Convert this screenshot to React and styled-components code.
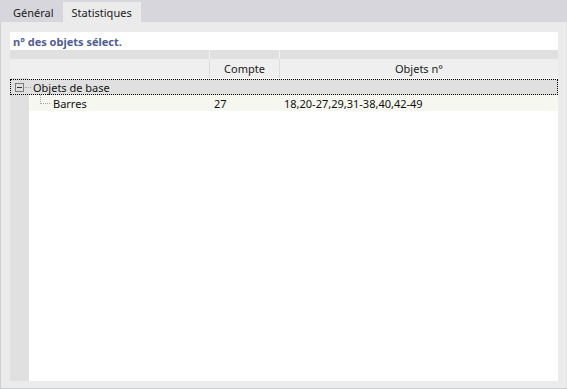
import styled, { createGlobalStyle } from 'styled-components'

const Global = createGlobalStyle`
  html, body { margin: 0; padding: 0; background: #ebebeb; }
  body { font-family: "Noto Sans", "Open Sans", sans-serif; font-size: 11px; color: #111; }
`

const Window = styled.div`
  width: 567px;
  height: 389px;
  display: flex;
  flex-direction: column;
  background: #d6d6dc;
  overflow: hidden;
`
const TabBar = styled.div`
  height: 22px;
  display: flex;
  align-items: flex-end;
  padding-left: 4px;
  flex-shrink: 0;
`
const Tab = styled.div`
  height: 20px;
  padding: 0 9px;
  display: flex;
  align-items: center;
  background: ${p => (p.active ? '#ebebeb' : 'transparent')};
  color: #1a1a1a;
`
const Panel = styled.div`
  flex: 1;
  display: flex;
  flex-direction: column;
  background: #ebebeb;
  border-left: 1px solid #cfcfd6;
  border-bottom: 1px solid #cfcfd6;
  border-right: 1px solid #e3e3e3;
  padding: 10px 8px 7px 9px;
  min-height: 0;
`
const Title = styled.div`
  height: 18px;
  background: #fff;
  display: flex;
  align-items: center;
  padding-left: 3px;
  font-weight: bold;
  color: #4f5e93;
`
const Table = styled.div`
  flex: 1;
  display: flex;
  flex-direction: column;
  background: #fff;
`
const Cols = styled.div`
  display: grid;
  grid-template-columns: 199px 69px 1fr;
  column-gap: 1px;
  background: ${p => p.line};
  height: ${p => p.h}px;
`
const HeadCell = styled.div`
  background: ${p => p.bg};
  display: flex;
  align-items: center;
  justify-content: center;
  color: #1a1a1a;
`
const Body = styled.div`
  flex: 1;
  display: flex;
  flex-direction: column;
  background: linear-gradient(to right, #e0e0e0 19px, #fff 19px);
  padding-top: 1px;
`
const GroupRow = styled.div`
  height: 14px;
  border: 1px dotted #000;
  background: #e0e0e0;
  display: flex;
  align-items: center;
  padding-left: 4px;
`
const Toggle = styled.span`
  width: 7px;
  height: 7px;
  border: 1px solid #7d7d7d;
  position: relative;
  flex-shrink: 0;
  &::after {
    content: '';
    position: absolute;
    left: 1px;
    top: 3px;
    width: 5px;
    height: 1px;
    background: #333;
  }
`
const HLine = styled.span`
  width: ${p => p.w}px;
  border-bottom: 1px dotted #a8a8a8;
  margin: 0 2px 0 1px;
  align-self: center;
`
const ItemRow = styled.div`
  margin-left: 19px;
  height: 16px;
  background: #f6f7ef;
  display: grid;
  grid-template-columns: 180px 69px 1fr;
  column-gap: 1px;
`
const NameCell = styled.div`
  display: flex;
  align-items: center;
`
const Branch = styled.span`
  width: 9px;
  height: 8px;
  margin-left: 11px;
  margin-right: 3px;
  align-self: flex-start;
  border-left: 1px dotted #a8a8a8;
  border-bottom: 1px dotted #a8a8a8;
`
const Cell = styled.div`
  display: flex;
  align-items: center;
  padding-left: 4px;
`

export default function App() {
  return (
    <Window>
      <Global />
      <TabBar>
        <Tab>Général</Tab>
        <Tab active>Statistiques</Tab>
      </TabBar>
      <Panel>
        <Title>n° des objets sélect.</Title>
        <Table>
          <Cols line="#f2f2f2" h={9}>
            <HeadCell bg="#e0e0e0" />
            <HeadCell bg="#e0e0e0" />
            <HeadCell bg="#e0e0e0" />
          </Cols>
          <Cols line="#dcdcdc" h={19}>
            <HeadCell bg="#efefef" />
            <HeadCell bg="#efefef">Compte</HeadCell>
            <HeadCell bg="#efefef">Objets n°</HeadCell>
          </Cols>
          <Body>
            <GroupRow>
              <Toggle />
              <HLine w={6} />
              <span>Objets de base</span>
            </GroupRow>
            <ItemRow>
              <NameCell>
                <Branch />
                <span>Barres</span>
              </NameCell>
              <Cell>27</Cell>
              <Cell>18,20-27,29,31-38,40,42-49</Cell>
            </ItemRow>
          </Body>
        </Table>
      </Panel>
    </Window>
  )
}
